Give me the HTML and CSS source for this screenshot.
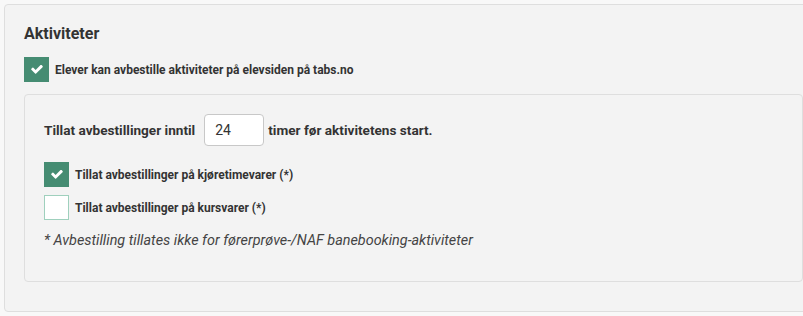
FILE: index.html
```html
<!DOCTYPE html>
<html lang="no">
<head>
  <meta charset="UTF-8" />
  <title>Aktiviteter</title>
  <link rel="stylesheet" href="styles.css">
</head>
<body>
  <div class="page">
    <div class="panel">
      <h3 class="panel-title">Aktiviteter</h3>

      <label class="check-row">
        <span class="checkbox checked">
          <svg class="check-icon" viewBox="100 400 1600 1100"><path d="M1671 566q0 40-28 68l-724 724-136 136q-28 28-68 28t-68-28l-136-136-362-362q-28-28-28-68t28-68l136-136q28-28 68-28t68 28l294 295 656-657q28-28 68-28t68 28l136 136q28 28 28 68z" fill="#fff"/></svg>
        </span>
        <span class="check-label">Elever kan avbestille aktiviteter på elevsiden på tabs.no</span>
      </label>

      <div class="sub-panel">
        <div class="hours-row">
          <span>Tillat avbestillinger inntil</span>
          <input class="hours-input" type="text" value="24" />
          <span>timer før aktivitetens start.</span>
        </div>

        <div class="check-list">
          <label class="check-row">
            <span class="checkbox checked">
              <svg class="check-icon" viewBox="100 400 1600 1100"><path d="M1671 566q0 40-28 68l-724 724-136 136q-28 28-68 28t-68-28l-136-136-362-362q-28-28-28-68t28-68l136-136q28-28 68-28t68 28l294 295 656-657q28-28 68-28t68 28l136 136q28 28 28 68z" fill="#fff"/></svg>
            </span>
            <span class="check-label">Tillat avbestillinger på kjøretimevarer (*)</span>
          </label>
          <label class="check-row">
            <span class="checkbox"></span>
            <span class="check-label">Tillat avbestillinger på kursvarer (*)</span>
          </label>
        </div>

        <p class="note">* Avbestilling tillates ikke for førerprøve-/NAF banebooking-aktiviteter</p>
      </div>
    </div>
  </div>
</body>
</html>
```

FILE: styles.css
```css
body {
  margin: 0;
  background-color: #f8f8f8;
  color: #333;
  font-family: Roboto, "Liberation Sans", sans-serif;
  overflow: hidden;
}

.page {
  padding: 4px 0 4px 4px;
  overflow: hidden;
}

.panel {
  margin-right: -20px;
  background-color: #f3f3f3;
  border: 1px solid #dedede;
  border-radius: 4px;
  padding: 19px 19px 29px;
}

.panel-title {
  margin: 0 0 13px;
  font-size: 16px;
  font-weight: 700;
  line-height: 20px;
}

.check-row {
  display: flex;
  align-items: center;
  gap: 6px;
}

.checkbox {
  width: 25px;
  height: 25px;
  box-sizing: border-box;
  border: 1px solid #9fd0bd;
  background-color: #fff;
  display: flex;
  align-items: center;
  justify-content: center;
}

.checkbox.checked {
  background-color: #458c72;
  border-color: #458c72;
}

.check-icon {
  width: 12px;
  height: 9px;
}

.check-label {
  font-size: 12px;
  font-weight: 700;
}

.sub-panel {
  margin-top: 12px;
  border: 1px solid #dedede;
  border-radius: 4px;
  padding: 19px 19px 32px;
}

.hours-row {
  display: flex;
  align-items: center;
  font-size: 13.6px;
  font-weight: 700;
}

.hours-input {
  width: 60px;
  height: 32px;
  box-sizing: border-box;
  margin: 0 4px 0 9px;
  border: 1px solid #c8c8c8;
  border-radius: 4px;
  padding: 0 10px;
  font-family: inherit;
  font-size: 14px;
  color: #333;
  background: #fff;
}

.check-list {
  margin-top: 16px;
  display: flex;
  flex-direction: column;
  gap: 8px;
}

.note {
  margin: 12px 0 0;
  font-size: 14.4px;
  font-style: italic;
  color: #444;
}
```
